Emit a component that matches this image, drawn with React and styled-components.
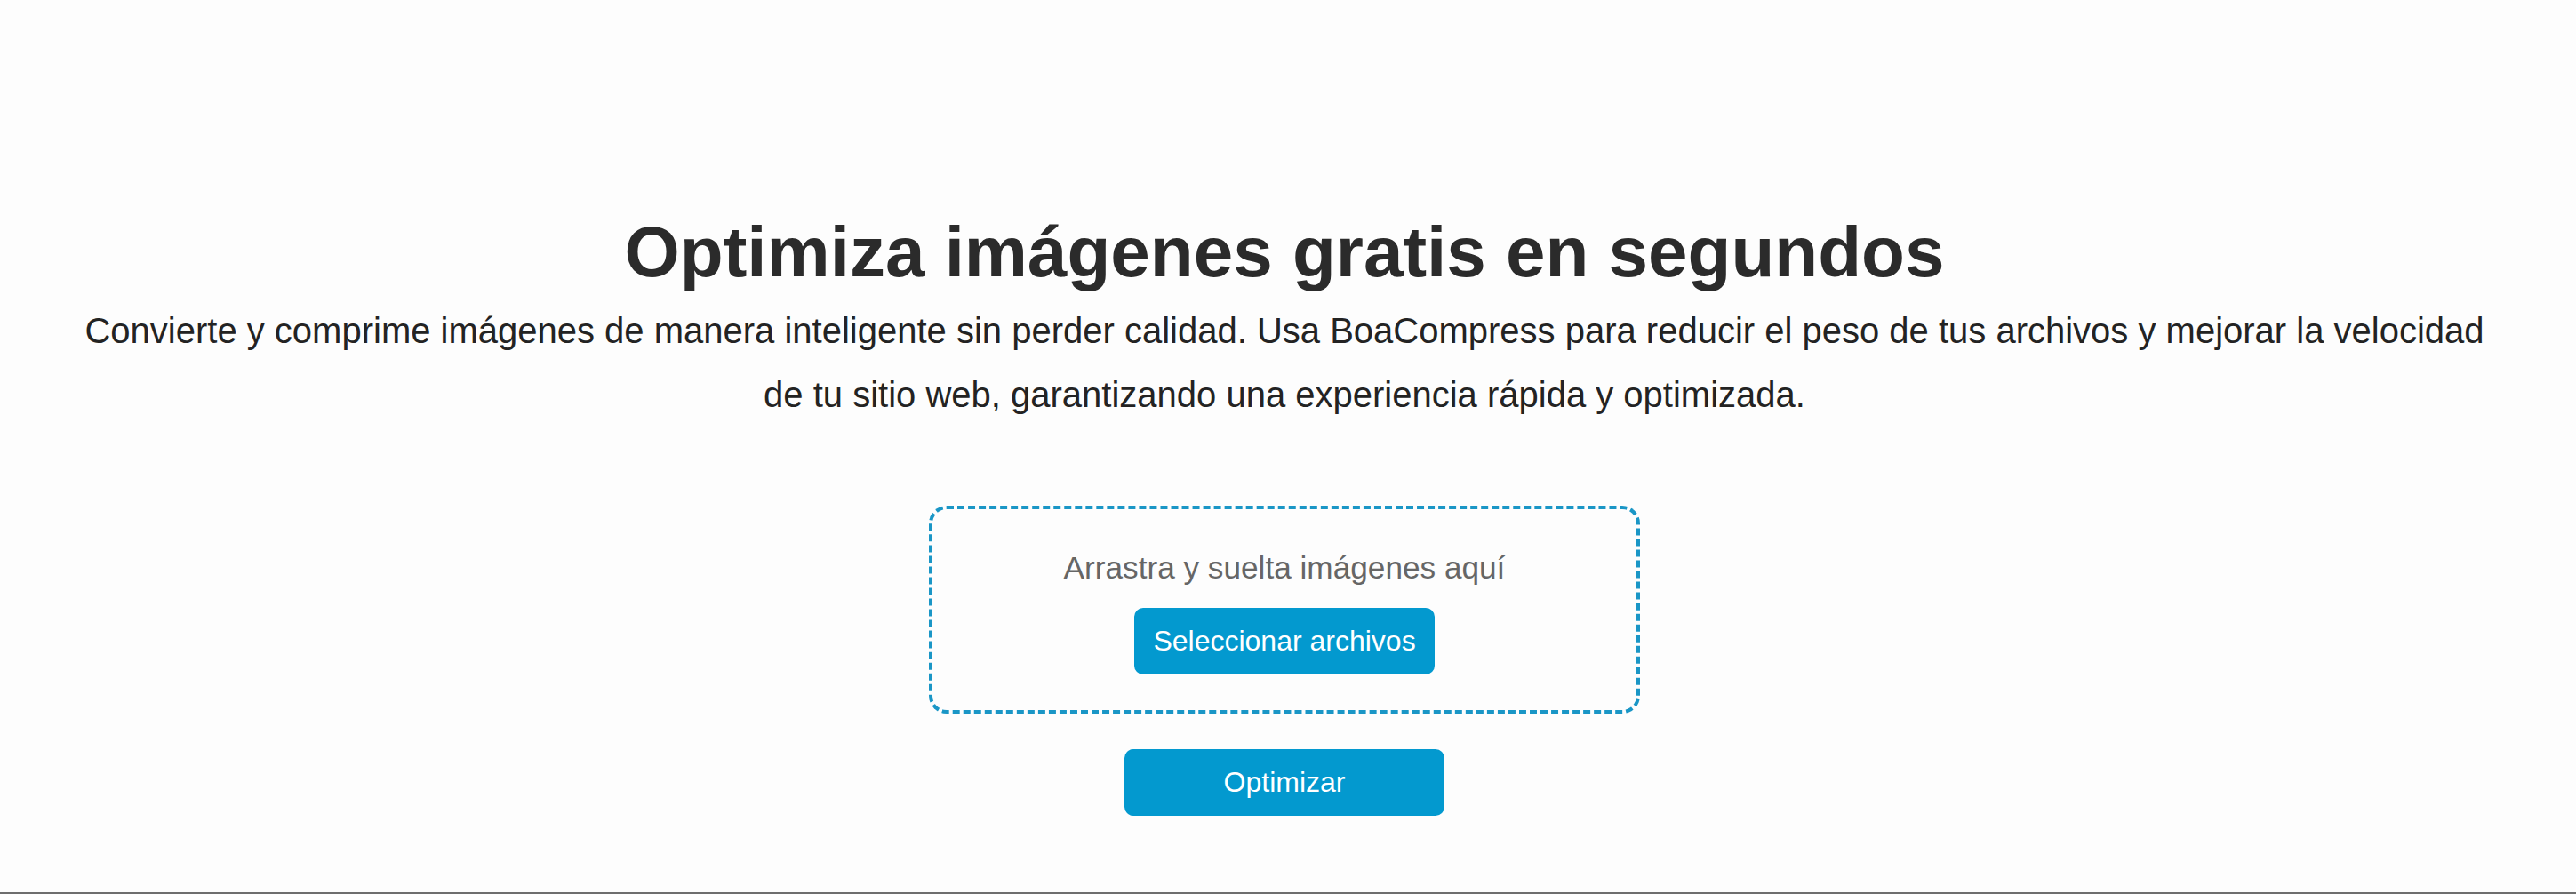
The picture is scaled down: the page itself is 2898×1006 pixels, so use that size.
import styled, { createGlobalStyle } from 'styled-components';

const GlobalStyle = createGlobalStyle`
  * { box-sizing: border-box; }
  html, body {
    margin: 0;
    padding: 0;
    background: #fdfdfd;
    font-family: "Liberation Sans", Arial, Helvetica, sans-serif;
  }
`

function App(){
    return(
        <Page>
          <GlobalStyle />
          <Main>
            <Title>Optimiza imágenes gratis en segundos</Title>
            <Lead>
              Convierte y comprime imágenes de manera inteligente sin perder calidad. Usa BoaCompress para reducir el peso de tus archivos y mejorar la velocidad de tu sitio web, garantizando una experiencia rápida y optimizada.
            </Lead>

            <DropZone>
              <DropText>Arrastra y suelta imágenes aquí</DropText>
              <Button type="button">Seleccionar archivos</Button>
            </DropZone>

            <Button type="button" wide>Optimizar</Button>
          </Main>
          <Footer />
        </Page>
    )
}

export default App

const Page = styled.div`
    min-height: 1006px;
    display: flex;
    flex-direction: column;
    background: #fdfdfd;
`

const Main = styled.main`
    flex-grow: 1;
    display: flex;
    flex-direction: column;
    align-items: center;
    padding: 238px 8px 0 0;
`

const Title = styled.h1`
    margin: 0;
    font-size: 80px;
    line-height: 92px;
    font-weight: 700;
    color: #2b2b2b;
    text-align: center;
`

const Lead = styled.p`
    margin: 6px auto 0;
    max-width: 2720px;
    font-size: 40px;
    line-height: 72px;
    color: #232323;
    text-align: center;
`

const DropZone = styled.div`
    margin-top: 89px;
    width: 800px;
    padding: 40px;
    border: 4px dashed #1a96c6;
    border-radius: 20px;
    display: flex;
    flex-direction: column;
    align-items: center;
`

const DropText = styled.p`
    margin: 0 0 19px;
    font-size: 35.2px;
    line-height: 52px;
    color: #666666;
`

const Button = styled.button`
    height: 75px;
    width: ${props => props.wide ? '360px' : 'auto'};
    margin-top: ${props => props.wide ? '40px' : '0'};
    padding: 0 21px;
    border: 0;
    border-radius: 10px;
    background-color: #0399cf;
    color: #ffffff;
    font-family: inherit;
    font-size: 32px;
    cursor: pointer;
`

const Footer = styled.div`
    height: 2px;
    background-color: #6e6e6e;
`
